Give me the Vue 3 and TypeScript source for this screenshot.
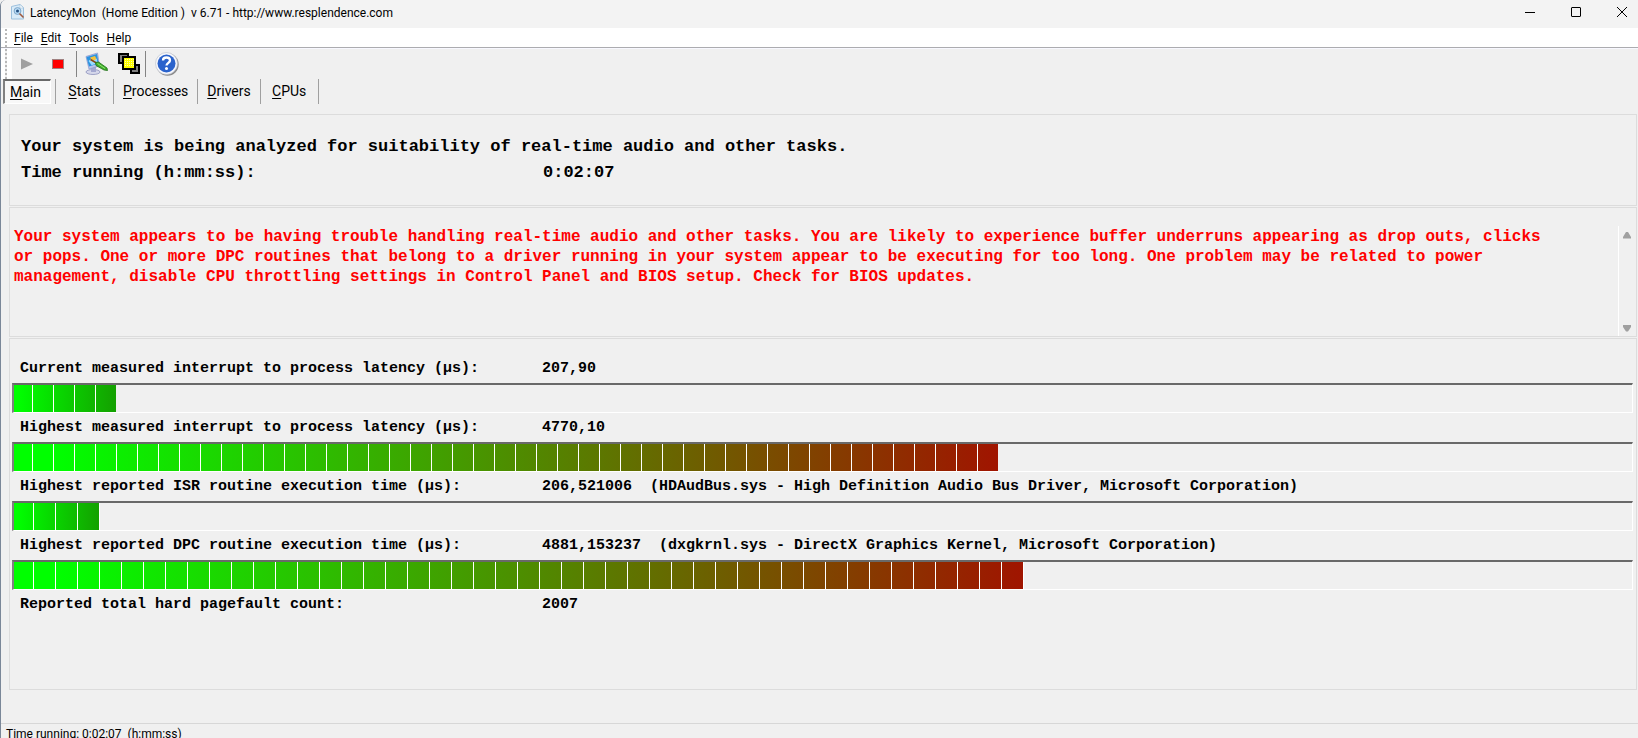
<script setup lang="ts">
interface Measure {
  id: string
  label: string
  value: string
  driver?: string
  percent: number
  segment: number
  end: string
}

const menus: string[] = ['File', 'Edit', 'Tools', 'Help']
const tabs: string[] = ['Main', 'Stats', 'Processes', 'Drivers', 'CPUs']

const measures: Measure[] = [
  { id: 'current', label: 'Current measured interrupt to process latency (µs):', value: '207,90', percent: 6.3, segment: 21, end: '#14a000' },
  { id: 'highest', label: 'Highest measured interrupt to process latency (µs):', value: '4770,10', percent: 60.8, segment: 21, end: '#a01400' },
  { id: 'isr', label: 'Highest reported ISR routine execution time (µs):', value: '206,521006', driver: '(HDAudBus.sys - High Definition Audio Bus Driver, Microsoft Corporation)', percent: 5.3, segment: 22, end: '#14a000' },
  { id: 'dpc', label: 'Highest reported DPC routine execution time (µs):', value: '4881,153237', driver: '(dxgkrnl.sys - DirectX Graphics Kernel, Microsoft Corporation)', percent: 62.4, segment: 22, end: '#a01400' },
]
</script>

<template>
  <div class="window">
    <header class="titlebar">
      <svg class="app-icon" width="16" height="16" viewBox="0 0 16 16" aria-hidden="true">
        <path d="M1.500 2.500L10 .5l3.500 3V15h-12z" fill="#d9ebf8" stroke="#9cc0dd" />
        <path d="M10 .5v3.500h3.500z" fill="#fff" stroke="#a9c6de" stroke-width=".6" />
        <circle cx="7.500" cy="7" r="3.400" fill="#b9dcf5" stroke="#7ea6ca" />
        <circle cx="7.500" cy="7" r="1.500" fill="#234f80" />
        <path d="M10 10l3 3" stroke="#a0583c" stroke-width="1.600" stroke-linecap="round" />
      </svg>
      <h1 class="title">LatencyMon&nbsp; (Home Edition )&nbsp; v 6.71 - http://www.resplendence.com</h1>
      <div class="captions">
        <button type="button" aria-label="Minimize">
          <svg width="12" height="12" viewBox="0 0 12 12"><path d="M1 6.500h10" stroke="#000" /></svg>
        </button>
        <button type="button" aria-label="Maximize">
          <svg width="12" height="12" viewBox="0 0 12 12"><rect x="1.500" y="1.500" width="9" height="9" rx=".5" fill="none" stroke="#000" /></svg>
        </button>
        <button type="button" aria-label="Close">
          <svg width="12" height="12" viewBox="0 0 12 12"><path d="M1 1l10 10M11 1L1 11" stroke="#000" /></svg>
        </button>
      </div>
    </header>

    <nav class="menubar" aria-label="Menu">
      <span class="grip"></span>
      <button v-for="menu in menus" :key="menu" type="button"><u>{{ menu[0] }}</u>{{ menu.slice(1) }}</button>
    </nav>

    <div class="toolbar" role="toolbar" aria-label="Monitor">
      <span class="grip"></span>
      <button type="button" class="tool play" aria-label="Start" disabled>
        <svg width="12" height="12" viewBox="0 0 12 12"><path d="M0 0.500L12 6L0 11.500z" fill="#a0a0a0" /></svg>
      </button>
      <button type="button" class="tool stop" aria-label="Stop">
        <svg width="12" height="10" viewBox="0 0 12 10"><rect x=".5" y=".5" width="11" height="9" fill="#f00" stroke="#a08080" /></svg>
      </button>
      <span class="rule"></span>
      <button type="button" class="tool" aria-label="Options">
        <svg width="24" height="24" viewBox="0 0 24 24">
          <ellipse cx="9" cy="20" rx="7" ry="2.500" fill="#d5d7ea" stroke="#8d92bd" stroke-width=".8" />
          <path d="M7 15h5v5H7z" fill="#a3a8d0" />
          <path d="M2 4.500L13.500 1l2 13L5 17z" fill="#b9c4ea" stroke="#8a9bd0" stroke-width=".8" />
          <path d="M2.500 5l10.500-3 1.600 9.500L5 14.500z" fill="#2a93e0" />
          <path d="M4.500 9l4-3.500L12.800 7l.9 4-6 2.200z" fill="#9bdcff" />
          <path d="M6 5.500l5-1.500 1.500 3-4 2z" fill="#f4c33c" />
          <path d="M6.500 7.500l6 3.500" stroke="#8a4a18" stroke-width="1.500" />
          <path d="M11.500 10.500l3-.5 8.500 6 .5 2.500-3.500-.5-8-4.500z" fill="#3fb02c" stroke="#1f6f18" stroke-width=".8" />
          <path d="M13.500 11.500l7.500 5" stroke="#8fe070" />
        </svg>
      </button>
      <button type="button" class="tool" aria-label="Windows">
        <svg width="24" height="24" viewBox="0 0 24 24" shape-rendering="crispEdges">
          <rect x="2" y="2" width="9" height="9" fill="#808080" stroke="#000" stroke-width="2" />
          <rect x="14" y="13" width="8" height="8" fill="#808080" stroke="#000" stroke-width="2" />
          <rect x="6" y="5" width="12" height="12" fill="#ff0" stroke="#000" stroke-width="2" />
          <path d="M8 7.500h9M8 9.500h9M8 11.500h9M8 13.500h9" stroke="#ffffb0" stroke-dasharray="1 1" />
        </svg>
      </button>
      <span class="rule"></span>
      <button type="button" class="tool help" aria-label="Help">
        <svg width="24" height="24" viewBox="0 0 24 24">
          <circle cx="12.500" cy="12.500" r="11.200" fill="#8b8b8b" />
          <circle cx="11.500" cy="11.500" r="11" fill="#f6f7fb" stroke="#b7bcc8" stroke-width=".6" />
          <circle cx="11.500" cy="11.500" r="9" fill="#2b63cc" />
          <path d="M8 8.500C8 6.700 9.400 5.500 11.500 5.500S15 6.700 15 8.500c0 2.200-3.500 2.500-3.500 5" fill="none" stroke="#fff" stroke-width="2.300" />
          <circle cx="11.500" cy="16.500" r="1.500" fill="#fff" />
        </svg>
      </button>
    </div>

    <div class="tabs" role="tablist">
      <button
        v-for="(tab, i) in tabs"
        :key="tab"
        type="button"
        role="tab"
        :aria-selected="i === 0"
        :class="{ active: i === 0 }"
      ><span><u>{{ tab[0] }}</u>{{ tab.slice(1) }}</span></button>
    </div>

    <main class="content">
      <section class="panel summary">
        <p>Your system is being analyzed for suitability of real-time audio and other tasks.</p>
        <p class="pair"><span>Time running (h:mm:ss):</span><span>0:02:07</span></p>
      </section>

      <section class="panel verdict">
        <p>Your system appears to be having trouble handling real-time audio and other tasks. You are likely to experience buffer underruns appearing as drop outs, clicks or pops. One or more DPC routines that belong to a driver running in your system appear to be executing for too long. One problem may be related to power management, disable CPU throttling settings in Control Panel and BIOS setup. Check for BIOS updates.</p>
        <div class="scrollbar">
          <button type="button" aria-label="Scroll up" disabled>
            <svg width="8" height="7" viewBox="0 0 8 7"><path d="M3 0h2l3 5v1.500H0V5z" fill="#a0a0a0" /></svg>
          </button>
          <button type="button" aria-label="Scroll down" disabled>
            <svg width="8" height="7" viewBox="0 0 8 7"><path d="M0 0h8v2L5 6.500H3L0 2z" fill="#a0a0a0" /></svg>
          </button>
        </div>
      </section>

      <section class="panel measures">
        <div v-for="m in measures" :key="m.id" class="measure">
          <p class="pair">
            <span :id="m.id">{{ m.label }}</span>
            <span>{{ m.value }}<template v-if="m.driver">&nbsp; {{ m.driver }}</template></span>
          </p>
          <div class="track" role="progressbar" :aria-labelledby="m.id" :aria-valuenow="m.percent">
            <div class="fill" :style="{ width: m.percent + '%', '--end': m.end, '--segment': m.segment + 'px' }"></div>
          </div>
        </div>
        <p class="pair"><span>Reported total hard pagefault count:</span><span>2007</span></p>
      </section>
    </main>

    <footer class="status">Time running: 0:02:07&nbsp; (h:mm:ss)</footer>
  </div>
</template>

<style>
body {
  margin: 0;
  background: #f0f0f0;
}
</style>

<style scoped>
.window {
  display: flex;
  flex-direction: column;
  box-sizing: border-box;
  height: 100vh;
  overflow: hidden;
  border-left: 1px solid #7a8798;
  border-top-left-radius: 6px;
  background: #f0f0f0;
  color: #000;
  font: 12px/16px Roboto, "Noto Sans", sans-serif;
}
p,
h1 {
  margin: 0;
}
button {
  margin: 0;
  padding: 0;
  border: 0;
  background: none;
  color: inherit;
  font: inherit;
}
svg {
  display: block;
}
u {
  text-underline-offset: 2px;
}
.titlebar {
  display: flex;
  flex: none;
  align-items: center;
  height: 28px;
  box-sizing: border-box;
  padding: 0 0 4px 9px;
  background: #f3f3f3;
}
.title {
  flex: 1;
  margin-left: 4px;
  padding-top: 1px;
  font-size: 12px;
  font-weight: 400;
}
.captions {
  display: flex;
  gap: 14px;
}
.captions button {
  display: flex;
  align-items: center;
  justify-content: center;
  width: 32px;
  height: 24px;
}
.menubar {
  display: flex;
  flex: none;
  gap: 8px;
  align-items: center;
  height: 19px;
  border-bottom: 1px solid #acacb0;
  background: #fff;
}
.grip {
  flex: none;
  align-self: stretch;
  width: 2px;
  background: repeating-linear-gradient(#b8b8b8 0 2px, transparent 2px 4px);
}
.menubar .grip {
  margin: 1px -1px 0 4px;
}
.toolbar {
  display: flex;
  flex: none;
  align-items: center;
  height: 30px;
  border-top: 1px solid #f8f8ff;
}
.toolbar .grip {
  border-left: 4px solid #fff;
  border-right: 5px solid #fff;
  background-clip: padding-box;
}
.tool {
  margin-right: 9px;
}
.tool.play {
  margin: 0 19px 0 9px;
}
.tool.stop {
  margin-right: 12px;
}
.rule {
  width: 1px;
  height: 26px;
  margin-right: 7px;
  background: #848484;
}
.toolbar .rule ~ .rule {
  margin: 0 9px 0 -5px;
}
.tabs {
  display: flex;
  flex: none;
  height: 25px;
  font-size: 14px;
  line-height: 20px;
}
.tabs button {
  min-width: 58px;
  padding: 0 9px 2px;
  border-right: 1px solid #a0a0a0;
}
.tabs .active {
  min-width: 0;
  padding: 0 4px 0 2px;
}
.tabs .active span {
  display: block;
  box-sizing: border-box;
  width: 48px;
  height: 25px;
  padding: 1px 0 0 5px;
  border: 1px solid #fff;
  border-top: 2px solid #696969;
  border-left: 2px solid #808080;
  background: #f8f8f8;
  text-align: left;
}
.content {
  display: flex;
  flex: 1;
  flex-direction: column;
  gap: 1px;
  padding: 10px 1px 33px 8px;
  font-family: "Liberation Mono", "Courier New", monospace;
  font-weight: 700;
}
.panel {
  box-sizing: border-box;
  border: 1px solid #dcdcdc;
}
.pair {
  display: grid;
  grid-template-columns: 522px 1fr;
  white-space: nowrap;
}
.summary {
  height: 92px;
  padding: 19px 11px;
  font-size: 17px;
  line-height: 26px;
}
.verdict {
  display: flex;
  justify-content: space-between;
  height: 130px;
  padding: 18px 0 0 4px;
  color: #f00;
  font-size: 16px;
  line-height: 20px;
}
.verdict p {
  max-width: 160ch;
  padding-top: 1px;
}
.scrollbar {
  display: flex;
  flex: none;
  flex-direction: column;
  justify-content: space-between;
  width: 13px;
  padding: 6px 0 4px 4px;
  border-left: 1px solid #fff;
}
.measures {
  flex: 1;
  padding: 15px 3px 0 2px;
  font-size: 15px;
  line-height: 29px;
}
.measures .pair {
  padding-left: 8px;
}
.track {
  box-sizing: border-box;
  height: 30px;
  border: 1px solid #fff;
  border-top: 2px solid #696969;
  border-left: 2px solid #808080;
}
.fill {
  height: 27px;
  background:
    repeating-linear-gradient(90deg, transparent 0 calc(var(--segment) - 1px), #fff calc(var(--segment) - 1px) var(--segment)) -2px 0 / calc(100% + 2px) 100%,
    linear-gradient(90deg, #0f0 4%, var(--end));
}
.status {
  flex: none;
  height: 14px;
  padding-left: 5px;
  border-top: 1px solid #d7d7d7;
  line-height: 20px;
}
</style>
